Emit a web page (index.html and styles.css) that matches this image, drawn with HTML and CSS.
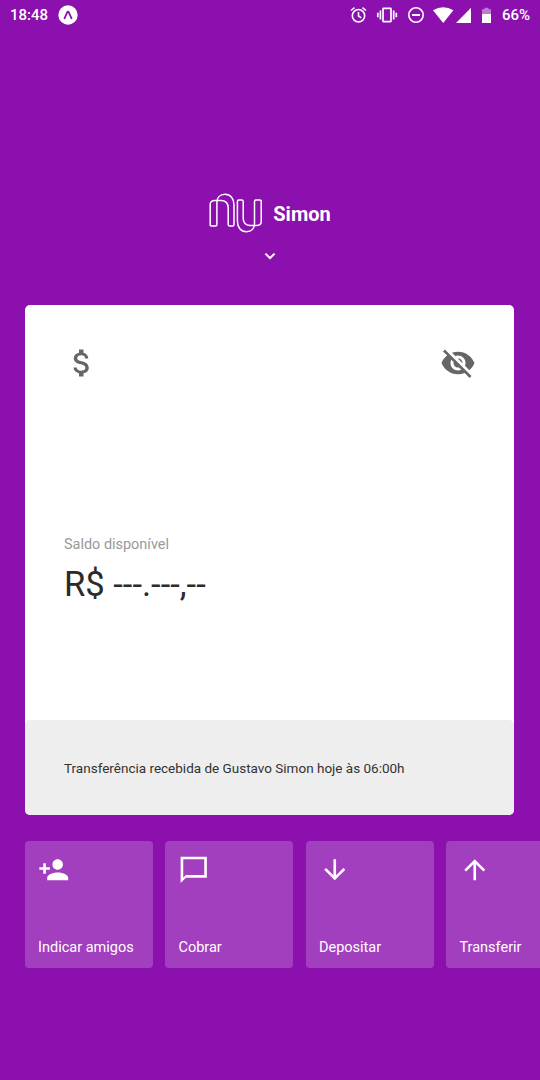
FILE: index.html
```html
<!DOCTYPE html>
<html lang="pt-BR">
<head>
<meta charset="utf-8">
<meta name="viewport" content="width=device-width, initial-scale=1">
<title>Conta</title>
<link rel="stylesheet" href="styles.css">
</head>
<body>
<div class="screen">
  <div class="status">
    <span class="clock">18:48</span>
    <svg class="expo" viewBox="0 0 20 20"><circle cx="10" cy="10" r="9.7" fill="#fff"/><path d="M6.5 13.3 9.3 7.2Q10 6.1 10.7 7.2L13.5 13.3" fill="none" stroke="#8b10ae" stroke-width="1.8" stroke-linecap="round"/></svg>
    <svg class="indicators" viewBox="0 0 150 20" fill="none" stroke="#fff">
      <g stroke-width="1.6"><circle cx="8.5" cy="10.7" r="6.2"/><path d="M8.5 7v4l2.8 1.8M1 5.5 4.5 2.7M16 5.5 12.5 2.7"/></g>
      <g stroke-width="1.7"><rect x="33" y="3.4" width="8" height="13.2" rx=".5"/><path d="M30.4 5.5v9M27.8 7.7v4.6M43.7 5.5v9M46.3 7.7v4.6"/></g>
      <g stroke-width="1.6"><circle cx="66" cy="10" r="7.2"/><path d="M62 10h8" stroke-width="2"/></g>
      <g fill="#fff" stroke="none"><path d="M83 5.3Q93.200-.6 103.400 5.300L93.200 18Z"/><path d="M106 17.900 121 2.800V17.900Z"/></g>
      <g fill="#fff" stroke="none"><path d="M132 4.300h2.500V2.700h4v1.600h2.500v5h-9z" opacity=".45"/><path d="M132 9h9v9h-9z"/></g>
    </svg>
    <span class="battery">66%</span>
  </div>

  <header class="header">
    <div class="brand">
      <svg class="logo" viewBox="0 0 54 40" fill="none" stroke="#fff" stroke-width="1.5" stroke-linejoin="round">
        <path id="arch" d="M1.200 33V11.500Q1.200 7.500 6 7.500H12.500Q19.200 8 19.200 15V31.500Q19.200 33 20.700 33H23.500Q25 33 25 31.500V12C25 5.500 21.500 1.300 16 1.300C10.500 1.300 7.900 5 7.900 9.500V31.500Q7.900 33 6.400 33H2.700Q1.200 33 1.200 31.500"/>
        <use href="#arch" transform="rotate(180 26.700 20)"/>
      </svg>
      <h1 class="name">Simon</h1>
    </div>
    <svg class="chevron" viewBox="0 0 24 24" fill="#fff" stroke="#fff" stroke-width=".6"><path d="M7.410 8.590 12 13.170l4.590-4.580L18 10l-6 6-6-6z"/></svg>
  </header>

  <main class="card">
    <div class="card-top">
      <svg class="card-icon" viewBox="0 0 24 24"><path d="M11.800 10.900c-2.270-.59-3-1.200-3-2.150 0-1.090 1.010-1.850 2.700-1.850 1.780 0 2.440.85 2.500 2.100h2.210c-.07-1.720-1.120-3.300-3.210-3.810V3h-3v2.160c-1.940.42-3.500 1.680-3.500 3.610 0 2.310 1.910 3.460 4.700 4.130 2.500.6 3 1.480 3 2.410 0 .69-.49 1.790-2.700 1.790-2.060 0-2.870-.92-2.980-2.100h-2.200c.12 2.190 1.760 3.420 3.680 3.830V21h3v-2.150c1.950-.37 3.500-1.500 3.500-3.550 0-2.840-2.430-3.810-4.700-4.400z"/></svg>
      <svg class="card-icon" viewBox="0 0 24 24"><path d="M12 7c2.760 0 5 2.240 5 5 0 .65-.13 1.260-.36 1.830l2.920 2.920c1.510-1.260 2.700-2.890 3.430-4.750-1.730-4.390-6-7.500-11-7.500-1.400 0-2.740.25-3.980.7l2.160 2.160C10.740 7.130 11.350 7 12 7zM2 4.270l2.280 2.280.46.46C3.080 8.300 1.780 10.020 1 12c1.730 4.390 6 7.500 11 7.500 1.550 0 3.030-.3 4.380-.84l.42.42L19.730 22 21 20.730 3.270 3 2 4.270zM7.530 9.800l1.550 1.550c-.05.21-.08.43-.08.65 0 1.660 1.340 3 3 3 .22 0 .44-.03.65-.08l1.550 1.550c-.67.33-1.410.53-2.200.53-2.760 0-5-2.240-5-5 0-.79.2-1.530.53-2.200zm4.310-.78 3.150 3.150.02-.16c0-1.660-1.340-3-3-3l-.17.01z"/></svg>
    </div>
    <div class="balance">
      <p class="label">Saldo disponível</p>
      <p class="amount">R$ ---.---,--</p>
    </div>
    <p class="notice">Transferência recebida de Gustavo Simon hoje às 06:00h</p>
  </main>

  <nav class="tabs">
    <div class="tab">
      <svg class="tab-icon" viewBox="0 0 24 24"><path d="M15 12c2.210 0 4-1.790 4-4s-1.790-4-4-4-4 1.790-4 4 1.790 4 4 4zm-9-2V7H4v3H1v2h3v3h2v-3h3v-2H6zm9 4c-2.670 0-8 1.340-8 4v2h16v-2c0-2.660-5.330-4-8-4z"/></svg>
      <span>Indicar amigos</span>
    </div>
    <div class="tab">
      <svg class="tab-icon" viewBox="0 0 24 24"><path d="M22 2H2v20l4-4h16V2zM20 16H6l-2 2V4h16v12z"/></svg>
      <span>Cobrar</span>
    </div>
    <div class="tab">
      <svg class="tab-icon" viewBox="0 0 24 24"><path d="M20 12l-1.410-1.410L13 16.170V4h-2v12.170l-5.580-5.590L4 12l8 8 8-8z"/></svg>
      <span>Depositar</span>
    </div>
    <div class="tab">
      <svg class="tab-icon" viewBox="0 0 24 24"><path d="M4 12l1.410 1.410L11 7.830V20h2V7.830l5.580 5.590L20 12l-8-8-8 8z"/></svg>
      <span>Transferir</span>
    </div>
  </nav>
</div>
</body>
</html>
```
FILE: styles.css
```css
* { box-sizing: border-box; margin: 0; }

body {
  background: #8b10ae;
  color: #fff;
  font-family: Roboto, sans-serif;
}

.screen {
  display: flex;
  flex-direction: column;
  width: 540px;
  height: 1080px;
  overflow: hidden;
}

.status {
  display: flex;
  align-items: center;
  height: 30px;
  padding: 0 10px;
  font-size: 15px;
  font-weight: 500;
}

.clock { width: 48px; }
.expo { width: 20px; height: 20px; }
.indicators { width: 150px; height: 20px; margin-left: 272px; }
.battery { margin-left: auto; }

.header {
  display: flex;
  flex-direction: column;
  align-items: center;
  margin-top: 163px;
}

.brand { display: flex; align-items: center; gap: 10px; }
.logo { width: 54px; height: 40px; }
.name { padding-top: 2px; font-size: 20px; font-weight: 700; line-height: 24px; }
.chevron { width: 20px; height: 20px; margin-top: 13px; }

.card {
  display: flex;
  flex-direction: column;
  width: 489px;
  height: 510px;
  margin: 39px 0 0 25px;
  border-radius: 5px;
  background: #fff;
}

.card-top {
  display: flex;
  justify-content: space-between;
  padding: 39.500px 38px 0 39px;
}

.card-icon { width: 36px; height: 36px; fill: #666; }

.balance {
  display: flex;
  flex: 1;
  flex-direction: column;
  justify-content: center;
  padding: 41.500px 39px 0;
}

.label { color: #999; font-size: 14.450px; line-height: 20px; }
.amount { margin-top: 6px; color: #2b2b2b; font-size: 34.600px; line-height: 46px; white-space: nowrap; }

.notice {
  height: 95px;
  padding: 38px 39px 0;
  border-radius: 5px;
  background: #eee;
  color: #333;
  font-size: 13.500px;
  line-height: 20px;
  white-space: nowrap;
}

.tabs { display: flex; gap: 12.600px; margin: 26px 0 0 25px; }

.tab {
  display: flex;
  flex: 0 0 127.900px;
  flex-direction: column;
  justify-content: space-between;
  align-items: flex-start;
  height: 127px;
  padding: 13px 13px 10px;
  border-radius: 4px;
  background: rgba(255, 255, 255, 0.2);
  font-size: 14.500px;
  line-height: 20px;
  white-space: nowrap;
}

.tab-icon { width: 31.500px; height: 31.500px; fill: #fff; }
```
